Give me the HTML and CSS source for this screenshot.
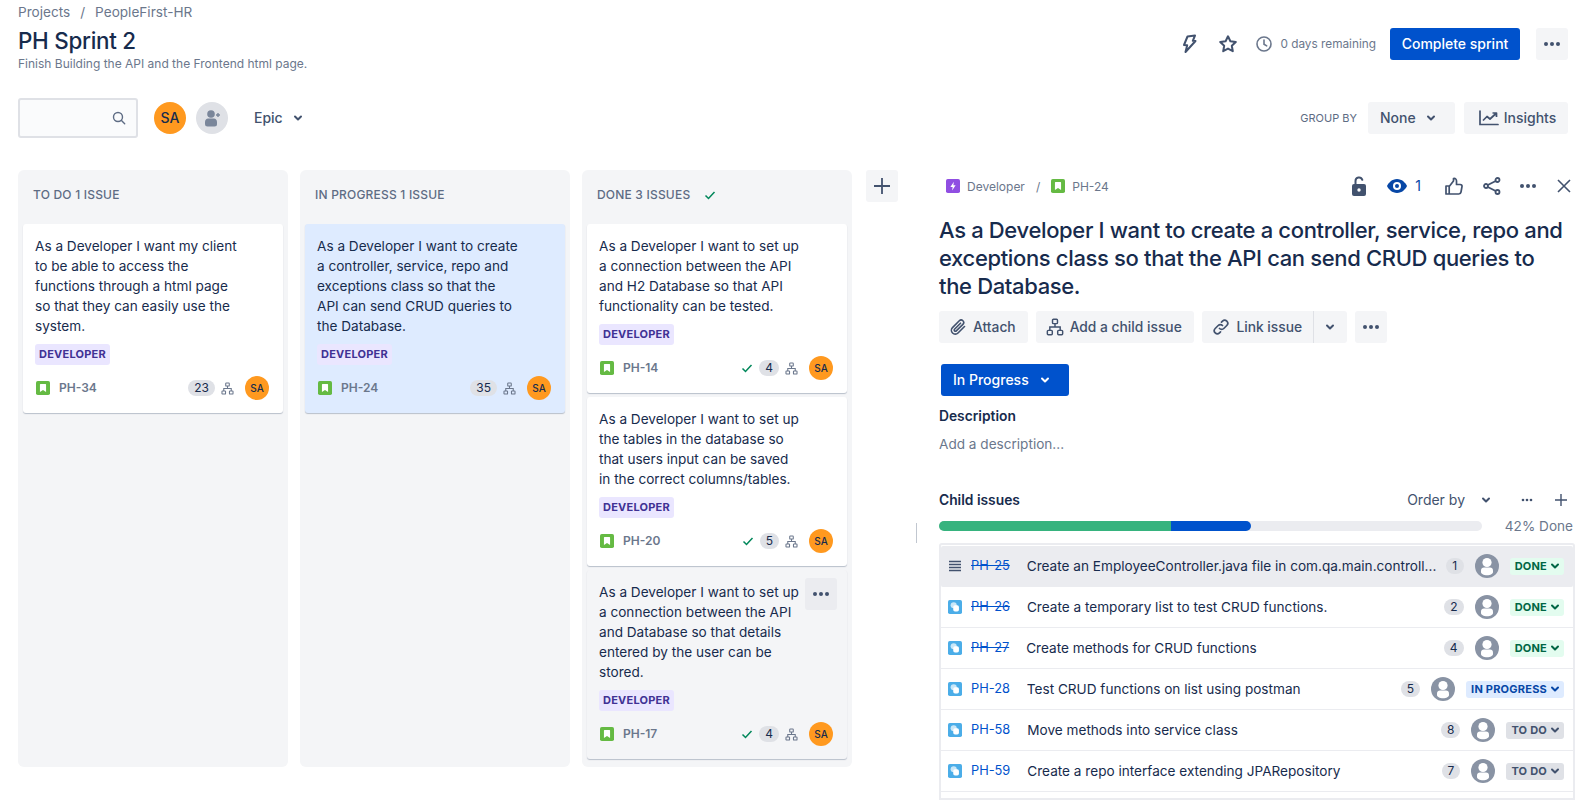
FILE: index.html
```html
<!DOCTYPE html>
<html lang="en">
<head>
    <meta charset="UTF-8">
    <meta name="viewport" content="width=device-width, initial-scale=1.0">
    <title>PH Sprint 2</title>
    <link rel="stylesheet" href="styles.css">
</head>
<body>
    <svg class="sprites" xmlns="http://www.w3.org/2000/svg">
        <symbol id="i-story" viewBox="0 0 16 16"><rect width="16" height="16" rx="2" fill="#65ba43"/><path d="M5 3.500h6a.5.5 0 0 1 .5.5v8.500L8 10.200l-3.500 2.300V4a.5.5 0 0 1 .5-.5z" fill="#fff"/></symbol>
        <symbol id="i-subtask" viewBox="0 0 16 16"><rect width="16" height="16" rx="2" fill="#4bade8"/><circle cx="6.500" cy="6" r="3.500" fill="#fff" opacity=".7"/><rect x="6" y="6" width="6.500" height="7" rx="2" fill="#fff"/></symbol>
        <symbol id="i-epic" viewBox="0 0 16 16"><rect width="16" height="16" rx="2" fill="#904ee2"/><path d="M9 3 5 9h2.600L7 13l4-6H8.400z" fill="#fff"/></symbol>
        <symbol id="i-hierarchy" viewBox="0 0 16 16"><g fill="none" stroke="currentColor" stroke-width="1.300"><rect x="5.800" y="1.200" width="4.400" height="3.800" rx=".8"/><rect x="1.200" y="11" width="4.400" height="3.800" rx=".8"/><rect x="10.400" y="11" width="4.400" height="3.800" rx=".8"/><path d="M8 5v3M3.400 11V8h9.200v3"/></g></symbol>
        <symbol id="i-chevron" viewBox="0 0 12 12"><path d="M3 4.500 6 7.500l3-3" fill="none" stroke="currentColor" stroke-width="2" stroke-linecap="round" stroke-linejoin="round"/></symbol>
        <symbol id="i-check" viewBox="0 0 12 12"><path d="M1.500 6.500 4.500 9.500 10.500 3" fill="none" stroke="currentColor" stroke-width="1.500"/></symbol>
        <symbol id="i-dots" viewBox="0 0 20 6"><circle cx="4" cy="3" r="2" fill="currentColor"/><circle cx="10" cy="3" r="2" fill="currentColor"/><circle cx="16" cy="3" r="2" fill="currentColor"/></symbol>
        <symbol id="i-person" viewBox="0 0 24 24"><circle cx="12" cy="12" r="12" fill="#8993a4"/><circle cx="12" cy="8.500" r="4.600" fill="#fff"/><path d="M9 13.500h6c1.800 0 3 1.200 3 3V18c0 1.800-2.500 3.200-6 3.200S6 19.800 6 18v-1.500c0-1.800 1.200-3 3-3z" fill="#fff"/></symbol>
    </svg>

    <header class="topbar">
        <div class="heading">
            <div class="crumbs"><span>Projects</span><span class="slash">/</span><span>PeopleFirst-HR</span></div>
            <h1>PH Sprint 2</h1>
            <p class="goal">Finish Building the API and the Frontend html page.</p>
        </div>
        <div class="sprint-actions">
            <svg class="ico bolt" viewBox="0 0 16 20"><path d="M6.500 2.500 14 1.500l-2.200 5.300 2.700.2L4.500 18l1.700-6.700-3.200-.3z" fill="none" stroke="currentColor" stroke-width="2" stroke-linejoin="round"/></svg>
            <svg class="ico star" viewBox="0 0 20 20"><path d="m10 2.300 2.400 5 5.400.7-4 3.800 1 5.400-4.800-2.600-4.800 2.600 1-5.400-4-3.800 5.400-.7z" fill="none" stroke="currentColor" stroke-width="2" stroke-linejoin="round"/></svg>
            <span class="remaining"><svg class="ico clock" viewBox="0 0 16 16"><circle cx="8" cy="8" r="7" fill="none" stroke="currentColor" stroke-width="1.600"/><path d="M8 4v4.200l2.700 1.700" fill="none" stroke="currentColor" stroke-width="1.600" stroke-linecap="round"/></svg>0 days remaining</span>
            <button class="btn primary complete">Complete sprint</button>
            <button class="btn square"><svg class="dots"><use href="#i-dots"/></svg></button>
        </div>
    </header>

    <section class="toolbar">
        <div class="search"><svg class="ico" viewBox="0 0 14 14"><circle cx="6" cy="6" r="4.500" fill="none" stroke="currentColor" stroke-width="1.400"/><path d="m9.500 9.500 3.200 3.200" stroke="currentColor" stroke-width="1.400" stroke-linecap="round"/></svg></div>
        <span class="avatar big">SA</span>
        <span class="add-user"><svg viewBox="0 0 20 20"><circle cx="9" cy="6" r="3.800" fill="#7a869a"/><path d="M3 14c0-2.300 1.500-3.500 3-3.500h6c1.500 0 3 1.200 3 3.500v2a2.500 2.500 0 0 1-2.500 2.500h-7A2.500 2.500 0 0 1 3 16z" fill="#7a869a"/><path d="M14 7h4M16 5v4" stroke="#7a869a" stroke-width="1.400"/></svg></span>
        <span class="epic">Epic<svg class="chev"><use href="#i-chevron"/></svg></span>
        <div class="toolbar-right">
            <span class="group-label">GROUP BY</span>
            <button class="btn none">None<svg class="chev"><use href="#i-chevron"/></svg></button>
            <button class="btn insights"><svg class="ico" viewBox="0 0 20 16"><path d="M1 1v13.500h18" fill="none" stroke="currentColor" stroke-width="1.700" stroke-linecap="round"/><path d="m4 10.500 4-4 3 2.500 6-5.500M13.500 3H17.500V7" fill="none" stroke="currentColor" stroke-width="1.700" stroke-linejoin="round"/></svg>Insights</button>
        </div>
    </section>

    <main class="workspace">
        <div class="board">
            <section class="column">
                <h2 class="col-title">To Do 1 issue</h2>
                <article class="card">
                    <p class="card-text">As a Developer I want my client to be able to access the functions through a html page so that they can easily use the system.</p>
                    <span class="tag">DEVELOPER</span>
                    <div class="card-foot">
                        <svg class="type"><use href="#i-story"/></svg><span class="card-key">PH-34</span>
                        <span class="meta"><span class="pill">23</span><svg class="tree"><use href="#i-hierarchy"/></svg><span class="avatar">SA</span></span>
                    </div>
                </article>
            </section>
            <section class="column">
                <h2 class="col-title">In Progress 1 issue</h2>
                <article class="card selected">
                    <p class="card-text">As a Developer I want to create a controller, service, repo and exceptions class so that the API can send CRUD queries to the Database.</p>
                    <span class="tag">DEVELOPER</span>
                    <div class="card-foot">
                        <svg class="type"><use href="#i-story"/></svg><span class="card-key">PH-24</span>
                        <span class="meta"><span class="pill">35</span><svg class="tree"><use href="#i-hierarchy"/></svg><span class="avatar">SA</span></span>
                    </div>
                </article>
            </section>
            <section class="column">
                <h2 class="col-title">Done 3 issues<svg class="tick head-tick"><use href="#i-check"/></svg></h2>
                <article class="card">
                    <p class="card-text">As a Developer I want to set up a connection between the API and H2 Database so that API functionality can be tested.</p>
                    <span class="tag">DEVELOPER</span>
                    <div class="card-foot">
                        <svg class="type"><use href="#i-story"/></svg><span class="card-key">PH-14</span>
                        <span class="meta"><svg class="tick"><use href="#i-check"/></svg><span class="pill">4</span><svg class="tree"><use href="#i-hierarchy"/></svg><span class="avatar">SA</span></span>
                    </div>
                </article>
                <article class="card">
                    <p class="card-text">As a Developer I want to set up the tables in the database so that users input can be saved in the correct columns/tables.</p>
                    <span class="tag">DEVELOPER</span>
                    <div class="card-foot">
                        <svg class="type"><use href="#i-story"/></svg><span class="card-key">PH-20</span>
                        <span class="meta"><svg class="tick"><use href="#i-check"/></svg><span class="pill">5</span><svg class="tree"><use href="#i-hierarchy"/></svg><span class="avatar">SA</span></span>
                    </div>
                </article>
                <article class="card hovered">
                    <p class="card-text">As a Developer I want to set up a connection between the API and Database so that details entered by the user can be stored.</p>
                    <button class="card-menu"><svg class="dots"><use href="#i-dots"/></svg></button>
                    <span class="tag">DEVELOPER</span>
                    <div class="card-foot">
                        <svg class="type"><use href="#i-story"/></svg><span class="card-key">PH-17</span>
                        <span class="meta"><svg class="tick"><use href="#i-check"/></svg><span class="pill">4</span><svg class="tree"><use href="#i-hierarchy"/></svg><span class="avatar">SA</span></span>
                    </div>
                </article>
            </section>
            <button class="btn square add-col"><svg viewBox="0 0 20 20"><path d="M10 2v16M2 10h16" stroke="currentColor" stroke-width="1.800"/></svg></button>
        </div>

        <aside class="panel">
            <div class="panel-top">
                <svg class="type"><use href="#i-epic"/></svg><span class="panel-crumb">Developer</span><span class="panel-slash">/</span>
                <svg class="type"><use href="#i-story"/></svg><span class="panel-crumb">PH-24</span>
                <div class="panel-icons">
                    <svg class="ico lock" viewBox="0 0 14 20"><path d="M3.500 8V5a3.500 3.500 0 0 1 6.800-1.200" fill="none" stroke="currentColor" stroke-width="2" stroke-linecap="round"/><path d="M2 8h10a2 2 0 0 1 2 2v8a2 2 0 0 1-2 2H2a2 2 0 0 1-2-2v-8a2 2 0 0 1 2-2z" fill="currentColor"/><circle cx="7" cy="14" r="1.700" fill="#fff"/></svg>
                    <span class="watch"><svg viewBox="0 0 20 14"><path d="M10 0c5 0 8.500 3.800 10 7-1.500 3.200-5 7-10 7S1.500 10.200 0 7c1.500-3.200 5-7 10-7z" fill="#0747a6"/><circle cx="10" cy="7" r="4" fill="#fff"/><circle cx="10" cy="7" r="2" fill="#0747a6"/></svg>1</span>
                    <svg class="ico like" viewBox="0 0 18 18"><path d="M1 9h3.200v8H1zM4.200 9.500 8.500 4V1.500c2-.5 3 1 3 2.500v3.500h3.700c1.300 0 2 1 1.800 2l-1 5.500c-.2 1-1 2-2.200 2H4.200" fill="none" stroke="currentColor" stroke-width="1.700" stroke-linejoin="round"/></svg>
                    <svg class="ico share" viewBox="0 0 18 18"><g fill="none" stroke="currentColor" stroke-width="1.800"><circle cx="14.500" cy="3" r="2"/><circle cx="3" cy="9" r="2"/><circle cx="14.500" cy="15" r="2"/><path d="m4.800 8 7.900-4M4.800 10l7.900 4"/></g></svg>
                    <svg class="dots"><use href="#i-dots"/></svg>
                    <svg class="ico cross" viewBox="0 0 14 14"><path d="m1 1 12 12M13 1 1 13" stroke="currentColor" stroke-width="1.600"/></svg>
                </div>
            </div>

            <h2 class="issue-title">As a Developer I want to create a controller, service, repo and exceptions class so that the API can send CRUD queries to the Database.</h2>

            <div class="issue-actions">
                <button class="btn act roomy"><svg class="ico" viewBox="0 0 18 18"><path d="M15.500 8.500 9 15a3.800 3.800 0 0 1-5.500-5.400l6.800-6.800a2.500 2.500 0 0 1 3.600 3.600l-6.600 6.500a1.200 1.200 0 0 1-1.800-1.700l6-6" fill="none" stroke="currentColor" stroke-width="1.600" stroke-linecap="round"/></svg>Attach</button>
                <button class="btn act roomy"><svg class="ico"><use href="#i-hierarchy"/></svg>Add a child issue</button>
                <div class="split">
                    <button class="btn act link"><svg class="ico" viewBox="0 0 18 18"><path d="M7.500 10.500a3 3 0 0 0 4.300 0l3-3a3 3 0 0 0-4.300-4.300l-1 1M10.500 7.500a3 3 0 0 0-4.300 0l-3 3a3 3 0 0 0 4.300 4.300l1-1" fill="none" stroke="currentColor" stroke-width="1.700" stroke-linecap="round"/></svg>Link issue</button>
                    <button class="btn act caret"><svg class="chev"><use href="#i-chevron"/></svg></button>
                </div>
                <button class="btn square"><svg class="dots"><use href="#i-dots"/></svg></button>
            </div>

            <button class="btn primary status-btn">In Progress<svg class="chev"><use href="#i-chevron"/></svg></button>

            <h3 class="section-title">Description</h3>
            <p class="add-desc">Add a description...</p>

            <div class="child-head">
                <h3 class="section-title">Child issues</h3>
                <div class="child-tools">
                    <span class="order">Order by<svg class="chev"><use href="#i-chevron"/></svg></span>
                    <svg class="dots small"><use href="#i-dots"/></svg>
                    <svg class="plus" viewBox="0 0 14 14"><path d="M7 1v12M1 7h12" stroke="currentColor" stroke-width="1.400"/></svg>
                </div>
            </div>

            <div class="progress-row">
                <div class="progress"><span class="seg green" style="width:232px"></span><span class="seg blue" style="width:80px"></span></div>
                <span class="progress-label">42% Done</span>
            </div>

            <div class="child-list">
                <div class="child hover">
                    <svg class="drag" viewBox="0 0 14 14"><path d="M1 2.500h12M1 5.500h12M1 8.500h12M1 11.500h12" stroke="#42526e" stroke-width="1.400"/></svg>
                    <span class="key done">PH-25</span>
                    <span class="summary">Create an EmployeeController.java file in com.qa.main.controll...</span>
                    <span class="pill">1</span>
                    <svg class="person"><use href="#i-person"/></svg>
                    <span class="status s-done">DONE<svg><use href="#i-chevron"/></svg></span>
                </div>
                <div class="child">
                    <svg class="sub"><use href="#i-subtask"/></svg>
                    <span class="key done">PH-26</span>
                    <span class="summary">Create a temporary list to test CRUD functions.</span>
                    <span class="pill">2</span>
                    <svg class="person"><use href="#i-person"/></svg>
                    <span class="status s-done">DONE<svg><use href="#i-chevron"/></svg></span>
                </div>
                <div class="child">
                    <svg class="sub"><use href="#i-subtask"/></svg>
                    <span class="key done">PH-27</span>
                    <span class="summary">Create methods for CRUD functions</span>
                    <span class="pill">4</span>
                    <svg class="person"><use href="#i-person"/></svg>
                    <span class="status s-done">DONE<svg><use href="#i-chevron"/></svg></span>
                </div>
                <div class="child">
                    <svg class="sub"><use href="#i-subtask"/></svg>
                    <span class="key">PH-28</span>
                    <span class="summary">Test CRUD functions on list using postman</span>
                    <span class="pill">5</span>
                    <svg class="person"><use href="#i-person"/></svg>
                    <span class="status s-progress">IN PROGRESS<svg><use href="#i-chevron"/></svg></span>
                </div>
                <div class="child">
                    <svg class="sub"><use href="#i-subtask"/></svg>
                    <span class="key">PH-58</span>
                    <span class="summary">Move methods into service class</span>
                    <span class="pill">8</span>
                    <svg class="person"><use href="#i-person"/></svg>
                    <span class="status s-todo">TO DO<svg><use href="#i-chevron"/></svg></span>
                </div>
                <div class="child">
                    <svg class="sub"><use href="#i-subtask"/></svg>
                    <span class="key">PH-59</span>
                    <span class="summary">Create a repo interface extending JPARepository</span>
                    <span class="pill">7</span>
                    <svg class="person"><use href="#i-person"/></svg>
                    <span class="status s-todo">TO DO<svg><use href="#i-chevron"/></svg></span>
                </div>
            </div>
        </aside>
    </main>
</body>
</html>
```

FILE: styles.css
```css
* {
    box-sizing: border-box;
}

body {
    margin: 0;
    height: 812px;
    overflow: hidden;
    background-color: #fff;
    color: #172b4d;
    font-family: Inter, "Noto Sans", sans-serif;
    font-size: 13.6px;
    line-height: 20px;
}

h1, h2, h3, p {
    margin: 0;
}

svg {
    display: block;
    flex: none;
}

.sprites {
    display: none;
}

/* buttons */
.btn {
    display: flex;
    align-items: center;
    justify-content: center;
    height: 32px;
    border: none;
    border-radius: 3px;
    background-color: #f4f5f7;
    color: #42526e;
    font-family: inherit;
    font-size: 14px;
    font-weight: 500;
    padding: 0 10px;
}

.btn.primary {
    background-color: #0052cc;
    color: #fff;
}

.btn.square {
    width: 32px;
    padding: 0;
}

.dots {
    width: 20px;
    height: 6px;
    color: #42526e;
}

.chev {
    width: 12px;
    height: 12px;
}

.ico {
    color: #42526e;
}

/* top */
.topbar {
    display: flex;
    justify-content: space-between;
    padding: 2px 19px 0 18px;
    height: 98px;
}

.crumbs {
    display: flex;
    color: #6b778c;
    height: 20px;
}

.slash {
    margin: 0 10px;
}

h1 {
    font-size: 22.4px;
    font-weight: 500;
    line-height: 28px;
    margin-top: 5px;
    letter-spacing: -0.27px;
}

.goal {
    font-size: 12px;
    line-height: 16px;
    color: #6b778c;
    padding-top: 1px;
}

.sprint-actions {
    display: flex;
    align-items: center;
    height: 32px;
    margin-top: 26px;
}

.bolt {
    width: 16px;
    height: 20px;
    margin-left: 1px;
}

.star {
    width: 20px;
    height: 20px;
    margin-left: 21px;
}

.remaining {
    display: flex;
    align-items: center;
    margin-left: 18px;
    font-size: 11.8px;
    color: #6b778c;
}

.clock {
    width: 16px;
    height: 16px;
    margin-right: 8px;
    color: #6b778c;
}

.complete {
    width: 130px;
    margin-left: 14px;
    margin-right: 16px;
    padding-bottom: 1px;
}

.toolbar {
    display: flex;
    align-items: center;
    padding: 0 19px 0 18px;
    height: 39px;
}

.search {
    display: flex;
    align-items: center;
    justify-content: flex-end;
    width: 120px;
    height: 40px;
    padding-right: 10px;
    border: 2px solid #dfe1e6;
    border-radius: 3px;
    background-color: #fafbfc;
}

.search svg {
    width: 14px;
    height: 14px;
    color: #5e6c84;
}

.avatar {
    display: flex;
    align-items: center;
    justify-content: center;
    width: 24px;
    height: 24px;
    border-radius: 50%;
    background-color: #ff991f;
    color: #172b4d;
    font-size: 10px;
    font-weight: 500;
}

.avatar.big {
    width: 32px;
    height: 32px;
    font-size: 14px;
    margin-left: 16px;
}

.add-user {
    display: flex;
    align-items: center;
    justify-content: center;
    width: 32px;
    height: 32px;
    margin-left: 10px;
    border-radius: 50%;
    background-color: #dfe1e6;
}

.add-user svg {
    width: 20px;
    height: 20px;
}

.epic {
    display: flex;
    align-items: center;
    gap: 9px;
    margin-left: 26px;
    font-size: 14px;
    font-weight: 500;
    color: #42526e;
}

.toolbar-right {
    display: flex;
    align-items: center;
    margin-left: auto;
}

.group-label {
    font-size: 11px;
    color: #5e6c84;
    margin-right: 11px;
}

.none {
    justify-content: flex-start;
    width: 87px;
    gap: 9px;
    padding-left: 12px;
}

.insights {
    width: 104px;
    margin-left: 9px;
    gap: 5px;
    padding-left: 13px;
}

.insights svg {
    width: 20px;
    height: 16px;
}

/* board */
.workspace {
    display: flex;
    height: 642px;
    margin-top: 33px;
    padding: 0 12px 0 18px;
}

.board {
    display: flex;
    align-items: flex-start;
    gap: 12px;
}

.column {
    width: 270px;
    height: 597px;
    padding: 0 5px;
    background-color: #f4f5f7;
    border-radius: 6px;
}

.col-title {
    display: flex;
    height: 54px;
    padding: 17px 0 0 10px;
    font-size: 12px;
    font-weight: 500;
    line-height: 16px;
    letter-spacing: 0.2px;
    text-transform: uppercase;
    color: #5e6c84;
}

.head-tick {
    margin: 2px 0 0 14px;
}

.card {
    position: relative;
    padding: 12px 14px 13px 12px;
    margin-bottom: 4px;
    background-color: #fff;
    border-radius: 3px;
    box-shadow: 0 1px 1px rgba(9, 30, 66, 0.25);
}

.card.selected {
    background-color: #deebff;
}

.card.hovered {
    background-color: #f4f5f7;
}

.card-text {
    padding-right: 32px;
    margin-bottom: 8px;
}

.card-menu {
    position: absolute;
    top: 8px;
    right: 10px;
    display: flex;
    align-items: center;
    justify-content: center;
    width: 32px;
    height: 32px;
    padding: 0;
    border: none;
    border-radius: 3px;
    background-color: #ebecf0;
}

.tag {
    display: inline-block;
    height: 21px;
    padding: 0 4px;
    background-color: #eae6ff;
    border-radius: 3px;
    color: #403294;
    font-size: 11px;
    font-weight: 700;
    line-height: 21px;
    letter-spacing: 0.02em;
    vertical-align: top;
}

.card-foot {
    display: flex;
    align-items: center;
    height: 24px;
    margin-top: 11px;
}

.type {
    width: 14px;
    height: 14px;
}

.card-foot .type {
    margin-left: 1px;
}

.card-key {
    margin-left: 9px;
    color: #6b778c;
    font-size: 12px;
    font-weight: 600;
}

.meta {
    display: flex;
    align-items: center;
    margin-left: auto;
}

.pill {
    display: flex;
    flex: none;
    align-items: center;
    justify-content: center;
    min-width: 18px;
    height: 16px;
    padding: 0 6px;
    border-radius: 8px;
    background-color: #dfe1e6;
    font-size: 12px;
}

.tick {
    width: 12px;
    height: 12px;
    color: #00875a;
}

.meta .tick {
    margin-right: 6px;
}

.tree {
    width: 13px;
    height: 13px;
    margin: 0 11px 0 6px;
    color: #6b778c;
}

.add-col {
    margin-left: 2px;
}

.add-col svg {
    width: 20px;
    height: 20px;
}

/* issue panel */
.panel {
    position: relative;
    width: 636px;
    margin-left: auto;
}

.panel::before {
    content: "";
    position: absolute;
    left: -23px;
    top: 353px;
    width: 1px;
    height: 20px;
    background-color: #c1c7d0;
}

.panel-top {
    display: flex;
    align-items: center;
    height: 20px;
    margin-top: 6px;
    padding-left: 7px;
}

.panel-crumb {
    margin-left: 7px;
    padding-top: 1px;
    font-size: 12px;
    color: #6b778c;
}

.panel-slash {
    margin: 0 11px;
    padding-top: 1px;
    font-size: 12px;
    color: #6b778c;
}

.panel-icons {
    display: flex;
    align-items: center;
    margin-left: auto;
    padding-right: 4px;
}

.lock {
    width: 14px;
    height: 20px;
}

.watch {
    display: flex;
    align-items: center;
    gap: 8px;
    margin-left: 21px;
    font-size: 14px;
    color: #0747a6;
}

.watch svg {
    width: 20px;
    height: 14px;
}

.like {
    width: 18px;
    height: 18px;
    margin-left: 24px;
}

.share {
    width: 18px;
    height: 18px;
    margin-left: 20px;
}

.panel-icons .dots {
    margin-left: 17px;
}

.cross {
    width: 14px;
    height: 14px;
    margin-left: 19px;
}

.issue-title {
    margin-top: 20px;
    padding-right: 6px;
    font-size: 22px;
    font-weight: 500;
    line-height: 28px;
    letter-spacing: -0.35px;
}

.issue-actions {
    display: flex;
    gap: 8px;
    margin-top: 11px;
}

.act {
    gap: 6px;
    font-size: 13.8px;
    padding-bottom: 1px;
}

.roomy {
    padding-right: 12px;
}

.act svg {
    width: 18px;
    height: 18px;
}

.split {
    display: flex;
}

.link {
    width: 112px;
    border-radius: 3px 0 0 3px;
    border-right: 1px solid #dfe1e6;
}

.caret {
    width: 33px;
    padding: 0;
    border-radius: 0 3px 3px 0;
}

.act .chev {
    width: 12px;
    height: 12px;
}

.status-btn {
    justify-content: flex-start;
    width: 128px;
    gap: 10px;
    margin: 21px 0 0 2px;
    padding: 0 0 1px 12px;
}

.section-title {
    font-size: 13.8px;
    font-weight: 600;
}

.status-btn + .section-title {
    margin-top: 10px;
}

.add-desc {
    margin-top: 8px;
    color: #6b778c;
}

.child-head {
    display: flex;
    align-items: center;
    justify-content: space-between;
    margin-top: 36px;
}

.child-tools {
    display: flex;
    align-items: center;
    color: #42526e;
}

.order {
    display: flex;
    align-items: center;
    gap: 15px;
    font-size: 14px;
}

.dots.small {
    width: 14px;
    height: 4px;
    margin-left: 28px;
}

.plus {
    width: 14px;
    height: 14px;
    margin: 0 7px 0 20px;
}

.progress-row {
    display: flex;
    align-items: center;
    justify-content: space-between;
    height: 10px;
    margin-top: 11px;
}

.progress {
    display: flex;
    width: 543px;
    height: 10px;
    border-radius: 5px;
    background-color: #ebecf0;
    overflow: hidden;
}

.seg {
    height: 10px;
}

.seg.green {
    background-color: #36b37e;
}

.seg.blue {
    background-color: #0052cc;
    border-radius: 0 5px 5px 0;
}

.progress-label {
    margin-right: 2px;
    color: #6b778c;
}

.child-list {
    margin-top: 12px;
    padding: 1px 0 8px;
    border: 2px solid #ebecf0;
    border-radius: 3px 3px 0 0;
    height: 257px;
}

.child {
    display: flex;
    align-items: center;
    height: 41px;
    padding: 0 9px 0 7px;
    border-bottom: 1px solid #ebecf0;
}

.child.hover {
    background-color: #ebecf0;
    border-radius: 2px;
}

.drag, .sub {
    width: 14px;
    height: 14px;
}

.key {
    margin-left: 9px;
    color: #0052cc;
    font-size: 12.8px;
}

.key.done {
    text-decoration: line-through;
}

.summary {
    flex: 1;
    min-width: 0;
    margin-left: 17px;
    white-space: nowrap;
    overflow: hidden;
}

.person {
    width: 24px;
    height: 24px;
    margin: 0 11px;
}

.status {
    display: flex;
    align-items: center;
    gap: 2px;
    height: 17px;
    padding: 0 3px 0 5px;
    border-radius: 3px;
    font-size: 11px;
    font-weight: 700;
    letter-spacing: 0.02em;
}

.status svg {
    width: 12px;
    height: 12px;
}

.s-done {
    background-color: #e3fcef;
    color: #006644;
}

.s-progress {
    background-color: #deebff;
    color: #0747a6;
}

.s-todo {
    background-color: #dfe1e6;
    color: #42526e;
}
```
